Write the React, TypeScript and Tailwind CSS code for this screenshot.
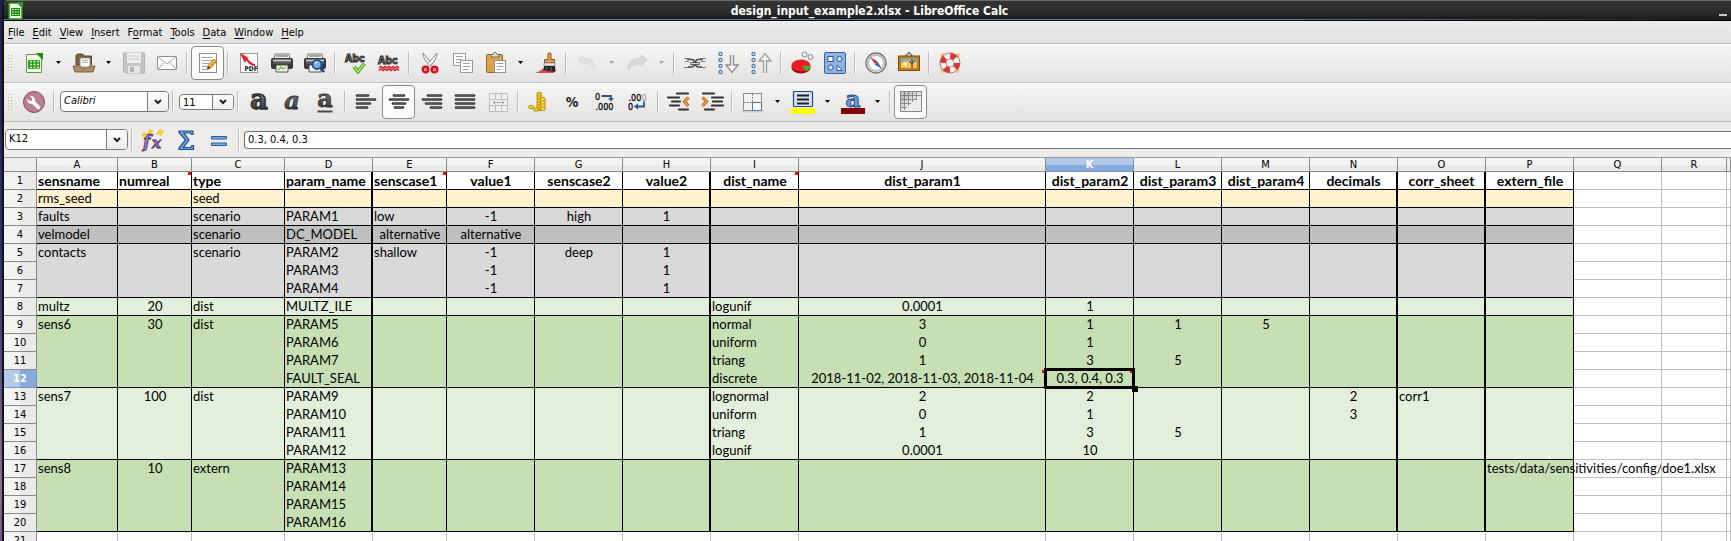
import React from "react";

/* ---------- icons ---------- */

function Icon({ children, size = 24 }: { children: React.ReactNode; size?: number }) {
  return (
    <svg width={size} height={size} viewBox="0 0 24 24" fill="none" aria-hidden="true" className="shrink-0 overflow-visible">
      {children}
    </svg>
  );
}

const NewSheet = () => (
  <Icon>
    <path d="M4.500 3.500h11l4 4v14h-15z" fill="#fbfdf9" stroke="#4aa52c" />
    <path d="M14 2h7v7z" fill="#1f8a12" />
    <rect x="6" y="9" width="12" height="9" rx="1" fill="#2fa016" />
    <path d="M8 10.500h2m1.500 0h2m1.500 0h2M8 13.500h2m1.500 0h2m1.500 0h2M8 16.500h2m1.500 0h2m1.500 0h2" stroke="#d9f3cd" strokeWidth="1.500" />
  </Icon>
);
const AppLogo = () => (
  <svg width="16" height="18" viewBox="0 0 16 18" aria-hidden="true">
    <path d="M1 1h9l4 4v12H1z" fill="#f2f7ef" stroke="#1d9410" strokeWidth="1.500" />
    <path d="M9 0h6v6z" fill="#27a316" />
    <path d="M3 6h9v8H3z" fill="#168a0a" />
    <path d="M4 7.500h2m1 0h1.500m1 0H11M4 10h2m1 0h1.500m1 0H11M4 12.500h2m1 0h1.500m1 0H11" stroke="#e3f6dc" />
  </svg>
);
const Folder = () => (
  <Icon>
    <path d="M4 14V4.500l1.500-1.500h5l1.500 2h7.500V14z" fill="#7c5f3c" stroke="#5c4428" />
    <path d="M8 7h10v9H8z" fill="#fff" stroke="#8d8d8d" />
    <path d="M10 9.500h6M10 11.500h6" stroke="#aaa" />
    <path d="M1 15h7l2 2h6l2-2h5l-2 6H3z" fill="#b08d66" stroke="#7d5f3c" />
  </Icon>
);
const Save = () => (
  <Icon>
    <path d="M1.500 2h21v20h-19l-2-2z" fill="#c4c4c4" stroke="#b2b2b2" />
    <path d="M5 2h14v10H5z" fill="#eee" />
    <path d="M6.500 5h11M6.500 8h11" stroke="#ccc" />
    <path d="M6 15h12v7H6z" fill="#e8e8e8" />
    <path d="M8 16h4v5H8z" fill="#b5b5b5" />
  </Icon>
);
const Mail = () => (
  <Icon>
    <rect x="2.500" y="5.500" width="19" height="13" rx="1" fill="#fff" stroke="#8b8b8b" />
    <path d="M3 6l9 7 9-7M3 18l6-6.500M21 18l-6-6.500" stroke="#a4a4a4" />
  </Icon>
);
const EditDoc = () => (
  <Icon>
    <rect x="3.500" y="2.500" width="17" height="19" fill="#fff" stroke="#8e8e8e" />
    <path d="M6 6.500h11M6 9.500h12M6 12.500h7M6 15.500h5M6 18.500h6" stroke="#a9a9a9" />
    <path d="M12 14.500l6-6.500 2.500 2.500-6 6.500-3 1z" fill="#f58a10" stroke="#a85606" strokeWidth=".8" />
    <path d="M13 15l6-6" stroke="#ffd35c" strokeWidth="1.300" />
    <path d="M11.500 18l.6-2.500 2 1.800z" fill="#222" />
  </Icon>
);
const Pdf = () => (
  <Icon>
    <rect x="3.500" y="2.500" width="17" height="19" fill="#fdfdfd" stroke="#9a9a9a" />
    <path d="M5 4c3 1 4 3 6 6s4 4 7 4M5 4l3 6 2-3z" stroke="#e3202c" strokeWidth="1.800" fill="#f05a62" />
    <text x="7.500" y="20" fontSize="6.500" fontWeight="700" fontFamily="DejaVu Sans Condensed, DejaVu Sans, sans-serif" fill="#111">PDF</text>
  </Icon>
);
const PrinterBody = () => (
  <>
    <path d="M5 3h14l1 5H4z" fill="#f4f4f4" stroke="#777" />
    <path d="M6 5h12" stroke="#555" />
    <rect x="1" y="7" width="22" height="11" rx="2" fill="#383838" />
    <path d="M3 9.500h18" stroke="#c9c9c9" strokeWidth="2" />
    <path d="M3 12h18" stroke="#777" />
    <path d="M6 14h12v7H6z" fill="#f3fbef" stroke="#4c4c4c" />
  </>
);
const Print = () => (
  <Icon>
    <PrinterBody />
    <path d="M8 19l3-3 2 2 3-2" stroke="#6cc04a" strokeWidth="1.500" />
  </Icon>
);
const Preview = () => (
  <Icon>
    <PrinterBody />
    <circle cx="14" cy="13.500" r="4.500" fill="#7fb0ea" stroke="#1d4f9c" strokeWidth="1.800" />
    <path d="M12 12.500l2-2" stroke="#e6f1ff" strokeWidth="1.500" />
    <path d="M17.500 17l3.500 4" stroke="#1d3f7c" strokeWidth="2.500" />
  </Icon>
);
const AbcText = () => (
  <text x="1" y="11" fontSize="10.500" fontWeight="700" fontFamily="DejaVu Sans Condensed, DejaVu Sans, sans-serif" fill="#8a8a8a" stroke="#2c2c2c" strokeWidth=".9">Abc</text>
);
const Spell = () => (
  <Icon>
    <AbcText />
    <path d="M10 16l4 4.500 6.500-8" stroke="#4b9d17" strokeWidth="3.500" />
    <path d="M10 16l4 4.500 6.500-8" stroke="#a7ec5e" strokeWidth="1.500" />
  </Icon>
);
const AutoSpell = () => (
  <Icon>
    <g transform="translate(0 2)"><AbcText /></g>
    <path d="M2 17l2-1.500 2 1.500 2-1.500 2 1.500 2-1.500 2 1.500 2-1.500 2 1.500 2-1.500 2 1.500M2 19.500L4 18l2 1.500L8 18l2 1.500 2-1.500 2 1.500 2-1.500 2 1.500 2-1.500 2 1.500" stroke="#d32029" strokeWidth="1.500" />
  </Icon>
);
const Cut = () => (
  <Icon>
    <path d="M5 2c0 5 3 9 7.500 13l2-2C11 9 8 6 5 2z" fill="#efefef" stroke="#7c7c7c" strokeWidth=".9" />
    <path d="M19 2c0 5-3 9-7.500 13l-2-2C13 9 16 6 19 2z" fill="#fafafa" stroke="#7c7c7c" strokeWidth=".9" />
    <circle cx="7.500" cy="18.500" r="2.800" stroke="#cc1322" strokeWidth="2.400" fill="#fff" />
    <circle cx="16.500" cy="18.500" r="2.800" stroke="#cc1322" strokeWidth="2.400" fill="#fff" />
    <circle cx="7.500" cy="18.500" r="1" fill="#cc1322" />
    <circle cx="16.500" cy="18.500" r="1" fill="#cc1322" />
  </Icon>
);
const Copy = () => (
  <Icon>
    <rect x="2.500" y="2.500" width="12" height="12" fill="#fff" stroke="#9a9a9a" />
    <path d="M5 5.500h7M5 8.500h6M5 11.500h4" stroke="#9f9f9f" />
    <rect x="9.500" y="9.500" width="12" height="12" fill="#fff" stroke="#9a9a9a" />
    <path d="M12 12.500h7M12 15.500h7M12 18.500h5" stroke="#9f9f9f" />
  </Icon>
);
const Paste = () => (
  <Icon>
    <rect x="2.500" y="3.500" width="16" height="18" rx="1" fill="#dba24b" stroke="#96631b" />
    <path d="M7 6V3.500h2L10 1.500h2l1 2h2V6z" fill="#ddd" stroke="#6a6a6a" />
    <rect x="10.500" y="9.500" width="11" height="12" fill="#fff" stroke="#8f8f8f" />
    <path d="M12.500 12.500h7M12.500 15.500h7M12.500 18.500h4" stroke="#a0a0a0" />
  </Icon>
);
const Brush = () => (
  <Icon>
    <path d="M1 22c4-1 6-3 9-5l10 1v4z" fill="#e14450" />
    <path d="M14 2.500q1.500-1.500 3 0v6h3.500V12h-10V8.500H14z" fill="#e2a252" stroke="#8a5a1e" />
    <path d="M10 12h11v3H10z" fill="#ededed" stroke="#777" strokeWidth=".7" />
    <path d="M10 15h11l.5 6-9-1-3-1z" fill="#262626" />
    <path d="M13 16l-1 3m5-3v4" stroke="#777" />
  </Icon>
);
const Undo = () => (
  <Icon>
    <path d="M3 9l5-5v3c8 0 12 4 12 11-2-4-6-6-12-6v2z" fill="#e1e1e1" stroke="#d8d8d8" strokeWidth=".8" />
  </Icon>
);
const Redo = () => (
  <Icon>
    <path d="M22 9l-6-5v3C7 7 3 11 3 19c3-4 7-6 13-6v2z" fill="#d9d9d9" stroke="#cccccc" strokeWidth=".8" />
  </Icon>
);
const Link = () => (
  <Icon>
    <path d="M1 7.500h6M2 10.500h4M1 16.500h6M17 7.500h6M18 10.500h4M17 16.500h6" stroke="#808080" />
    <path d="M4 8.500h5q2.500 0 2.500 3.500T9 16H5M20 8.500h-5q-2.500 0-2.500 3.500t2.500 4h4" stroke="#4f4f4f" strokeWidth="1.600" />
    <path d="M7 12.500h10" stroke="#4f4f4f" strokeWidth="2.600" />
    <path d="M7.500 12.500h9" stroke="#cfcfcf" />
  </Icon>
);
const Dots = () => (
  <>
    {[3, 9, 15, 21].map((y) => (
      <circle key={y} cx="4.500" cy={y} r="1.600" fill="#e9f0fb" stroke="#4c78b4" strokeWidth="1.200" />
    ))}
  </>
);
const SortDown = () => (
  <Icon>
    <Dots />
    <path d="M14.500 4v10h-4.500l6 7.500 6-7.500h-4.500V4" fill="#f2f2f2" stroke="#8d8d8d" strokeWidth="1.300" />
  </Icon>
);
const SortUp = () => (
  <Icon>
    <Dots />
    <path d="M14.500 22V10h-4.500l6-7.500 6 7.500h-4.500v12" fill="#f2f2f2" stroke="#9b9b9b" strokeWidth="1.300" />
  </Icon>
);
const Chart = () => (
  <Icon>
    <circle cx="14.500" cy="3.500" r="2.500" fill="#eee" stroke="#888" />
    <circle cx="20.500" cy="6" r="2.500" fill="#eee" stroke="#888" />
    <ellipse cx="11" cy="16.500" rx="9.500" ry="6" fill="#9c0c12" />
    <ellipse cx="11" cy="14.500" rx="9.500" ry="6" fill="#e81c22" />
    <path d="M12 15l8-.5c0 3-1 5-4 6z" fill="#45b020" />
  </Icon>
);
const Shapes = () => (
  <Icon>
    <rect x="1.500" y="1.500" width="21" height="21" rx="1.500" fill="#8fb4e3" stroke="#38659f" />
    <rect x="5" y="5.500" width="5" height="5" fill="#fff" stroke="#2c5692" />
    <circle cx="16.500" cy="8" r="2.600" fill="#cfe0f6" stroke="#2c5692" />
    <circle cx="7.500" cy="16.500" r="2.600" fill="#cfe0f6" stroke="#2c5692" />
    <path d="M14 14v5.500h5.500z" fill="#fff" stroke="#2c5692" />
  </Icon>
);
const Compass = () => (
  <Icon>
    <circle cx="12" cy="12" r="10" fill="#fff" stroke="#777" strokeWidth="1.400" />
    <circle cx="12" cy="12" r="8" stroke="#b9bfbf" strokeWidth="2" />
    <path d="M6 6l7.500 4.500-2.500 2.500z" fill="#d8232f" />
    <path d="M18 18l-7.500-4.500 3-3z" fill="#3c6dac" />
  </Icon>
);
const Gallery = () => (
  <Icon>
    <path d="M8 5.500l4-4 4 4" stroke="#777" strokeWidth="1.500" />
    <rect x="1.500" y="5" width="21" height="14.500" fill="#c07f17" stroke="#7b4a05" />
    <rect x="4" y="7.500" width="16" height="9.500" fill="#84abd0" />
    <path d="M4 12q8-5 16 0v5H4z" fill="#f1c067" />
    <circle cx="8" cy="13" r="2" fill="#fff0a8" />
    <path d="M15 17v-4l-3-3m3 3l3-3.500m-3 3V8" stroke="#3d2b12" />
  </Icon>
);
const Help = () => (
  <Icon>
    <path d="M3 3l18 18M21 3L3 21" stroke="#eac695" strokeWidth="4" />
    <circle cx="12" cy="12" r="7" stroke="#f6f0ec" strokeWidth="6" />
    <circle cx="12" cy="12" r="7" stroke="#dc3a2e" strokeWidth="6" strokeDasharray="5.500 5.500" />
    <circle cx="12" cy="12" r="10" stroke="#a84339" strokeWidth=".7" />
    <circle cx="12" cy="12" r="4" stroke="#a87a75" strokeWidth=".7" fill="#f1efee" />
  </Icon>
);
const Wrench = () => (
  <Icon>
    <circle cx="12" cy="12" r="10.500" fill="#bb7f92" stroke="#86485c" />
    <path d="M8 6l2.500 3-1 1.800-2.500.2L5.500 8.500c-1 3.500 1.500 6 4.500 5.200l5.500 5.300c1.500 1 3.500-1 2.500-2.500l-5-5.200C13.700 8 11.500 5.500 8 6z" fill="#fff" />
  </Icon>
);
const FmtA = ({ kind }: { kind: "bold" | "italic" | "under" }) => (
  <Icon>
    <defs>
      <linearGradient id={`ink-${kind}`} x1="0" y1="0" x2="0" y2="1">
        <stop offset="0" stopColor="#999" />
        <stop offset="1" stopColor="#222" />
      </linearGradient>
    </defs>
    <text
      x="12" y={kind === "under" ? 17 : 19} textAnchor="middle"
      fontSize={kind === "bold" ? 27 : 24}
      fontWeight="700"
      fontStyle={kind === "italic" ? "italic" : "normal"}
      fontFamily="DejaVu Serif, serif"
      fill={`url(#ink-${kind})`} stroke="#303030" strokeWidth={kind === "bold" ? 1.4 : 0.8}
    >a</text>
    {kind === "under" && <path d="M4.500 21.500h15" stroke="#4a4a4a" strokeWidth="2" />}
  </Icon>
);
const Bars = ({ rows }: { rows: [number, number][] }) => (
  <Icon>
    {rows.map(([a, b], i) => (
      <g key={i}>
        <path d={`M${a} ${5.5 + i * 4}H${b}`} stroke="#333" strokeWidth="2.600" strokeLinecap="round" />
        <path d={`M${a} ${5 + i * 4}H${b}`} stroke="#777" strokeWidth="1" />
      </g>
    ))}
  </Icon>
);
const Merge = () => (
  <Icon>
    <path d="M3.500 3.500h18v18h-18zM3.500 9.500h18M3.500 15.500h18M9.500 3.500v6m6-6v6m-6 6v6m6-6v6" stroke="#bdbdbd" fill="#f0f0f0" />
    <path d="M7 12.500h11M9 11l-2 1.500L9 14m7-3l2 1.500-2 1.500" stroke="#a9a9a9" />
  </Icon>
);
const Coins = () => (
  <Icon>
    <path d="M10 3q2-1.500 4.500 0v17q-2.500 1.500-4.500 0z" fill="#e9c31c" stroke="#a88503" strokeWidth=".8" />
    <path d="M13.500 8q2-1.500 4.500 0v12q-2.500 1.500-4.500 0z" fill="#f3d43c" stroke="#a88503" strokeWidth=".8" />
    <path d="M10 6h4m-4 3h3.500m-3.500 3h3.500m-3.500 3h3.500m-3.500 3h3.500m0-7H18m-4.500 3H18m-4.500 3H18" stroke="#b8940a" strokeWidth=".8" />
    <ellipse cx="4" cy="17" rx="2.600" ry="1.800" fill="#f1cf30" stroke="#a88503" strokeWidth=".8" />
    <ellipse cx="9" cy="19.500" rx="2.600" ry="1.800" fill="#f1cf30" stroke="#a88503" strokeWidth=".8" />
  </Icon>
);
const numFont = "DejaVu Sans Condensed, DejaVu Sans, sans-serif";
const Percent = () => (
  <Icon>
    <text x="12" y="16.500" textAnchor="middle" fontSize="14" fontWeight="700" fontFamily={numFont} fill="#1a1a1a">%</text>
  </Icon>
);
const AddDecimal = () => (
  <Icon>
    <text x="2" y="9.500" fontSize="9" fontFamily={numFont} fill="#111" stroke="#111" strokeWidth=".3">0</text>
    <text x="2.500" y="19.500" fontSize="9" fontFamily={numFont} fill="#111" stroke="#111" strokeWidth=".3">.000</text>
    <path d="M8.500 6h9.500v3" stroke="#2f5584" strokeWidth="1.800" />
    <path d="M15 8h6l-3 3.500z" fill="#2f5584" />
  </Icon>
);
const DropDecimal = () => (
  <Icon>
    <text x="2.500" y="10.500" fontSize="9" fontFamily={numFont} fill="#111" stroke="#111" strokeWidth=".3">.00<tspan fill="#aaa" stroke="#aaa">0</tspan></text>
    <text x="2" y="19.500" fontSize="9" fontFamily={numFont} fill="#111" stroke="#111" strokeWidth=".3">0</text>
    <path d="M18 11.500v5h-6" stroke="#2f5584" strokeWidth="1.800" />
    <path d="M12 13.500v6l-4-3z" fill="#2f5584" />
  </Icon>
);
const Indent = ({ dir }: { dir: "left" | "right" }) => (
  <Icon>
    {dir === "left" ? (
      <>
        <path d="M10 3.500h11M1 7.500h11M5 11.500h8M3 15.500h9M12 19.500h9" stroke="#333" strokeWidth="2.200" strokeLinecap="round" />
        <path d="M21.500 7.500l-4 4 4 4.500" stroke="#bd5606" strokeWidth="3" />
        <path d="M21.500 7.500l-4 4 4 4.500" stroke="#f7a254" strokeWidth="1.200" />
      </>
    ) : (
      <>
        <path d="M3 3.500h11M12 7.500h11M13 11.500h9M12 15.500h11M5 19.500h9" stroke="#333" strokeWidth="2.200" strokeLinecap="round" />
        <path d="M2.500 7.500l4 4-4 4.500" stroke="#bd5606" strokeWidth="3" />
        <path d="M2.500 7.500l4 4-4 4.500" stroke="#f7a254" strokeWidth="1.200" />
      </>
    )}
  </Icon>
);
const Borders = () => (
  <Icon>
    <path d="M1 21.500h22" stroke="#cfcfcf" strokeWidth="2" />
    <rect x="2.500" y="3.500" width="18" height="17" fill="#f3f3f3" stroke="#8f8f8f" />
    <path d="M11.500 4v8M3 12.500h8" stroke="#666" strokeDasharray="1.500 1.500" />
    <rect x="11.500" y="12.500" width="9" height="8" fill="#fff" stroke="#4c78b4" />
  </Icon>
);
const Highlight = () => (
  <Icon>
    <rect x="2.500" y="1.500" width="19" height="15" rx="1" fill="#d5e3f5" stroke="#1f4a88" strokeWidth="1.200" />
    <path d="M6 5.500h12M6 9.500h12M6 13.500h12" stroke="#222" strokeWidth="2" />
    <path d="M0 18h24v6H0z" fill="#ffff00" />
  </Icon>
);
const FontColor = () => (
  <Icon>
    <text x="12" y="16.500" textAnchor="middle" fontSize="23" fontWeight="700" fontFamily="DejaVu Serif, serif" fill="#6e9fd9" stroke="#1f4a88" strokeWidth=".9">a</text>
    <path d="M0 18h24v6H0z" fill="#800000" />
  </Icon>
);
const GridLines = () => (
  <Icon>
    <defs>
      <linearGradient id="sheet-fade" x1="0" y1="0" x2="1" y2="1">
        <stop offset="0.200" stopColor="#6f6f6f" />
        <stop offset="0.550" stopColor="#6f6f6f" stopOpacity="0" />
      </linearGradient>
    </defs>
    <rect x="1.500" y="1.500" width="21" height="20" fill="#ececec" stroke="#8a8a8a" />
    <path d="M2 5.500h20v.6H2zM2 9.500h20v.6H2zM2 13.500h20v.6H2zM2 17.500h20v.6H2zM5.500 2h.6v19h-.6zM9.500 2h.6v19h-.6zM13.500 2h.6v19h-.6zM17.500 2h.6v19h-.6z" fill="none" />
    <path d="M2 5.500h20M2 9.500h16M2 13.500h10M2 17.500h6M5.500 2v18M9.500 2v14M13.500 2v10M17.500 2v7" stroke="#858585" strokeWidth=".9" />
    <path d="M2 2h20v19H2z" fill="url(#sheet-fade)" opacity=".35" />
  </Icon>
);
const FxWizard = () => (
  <Icon>
    <text x="2" y="18.500" fontSize="17" fontWeight="700" fontStyle="italic" fontFamily="DejaVu Serif, serif" fill="#9a7ab0" stroke="#53306e" strokeWidth=".8">f</text>
    <text x="11" y="19.500" fontSize="15" fontWeight="700" fontStyle="italic" fontFamily="DejaVu Serif, serif" fill="#9a7ab0" stroke="#53306e" strokeWidth=".8">x</text>
    <path d="M3 4l1 2 2 .5L4.500 8 4 10 2.500 8 .5 7.500 2 6zM9 1l1 1.500 2 .5-1.500 1.500L10 6 8.500 5l-2 .5 1-2zM19 1l1.500 2 2.500.5-2 2L20 8l-2-2-2.500.5L17 4z" fill="#f6d83a" stroke="#dcb818" strokeWidth=".5" />
  </Icon>
);
const Sigma = () => (
  <Icon>
    <path d="M5 3h14v3.500h-1.500l-1-1.500H10l5 7-5.500 7.500h7l1.500-2h1.500v4H5v-1.500L11.500 12 5 4.500z" fill="#6fa0dc" stroke="#204f8e" strokeWidth="1.200" />
  </Icon>
);
const Equals = () => (
  <Icon>
    <path d="M4.500 8.500h15v2.500h-15zM4.500 15h15v2.500h-15z" fill="#7aaae2" stroke="#2a5ea3" />
  </Icon>
);

/* ---------- toolbar pieces ---------- */

function Tool({ label, icon, pressed, disabled }: { label: string; icon: React.ReactNode; pressed?: boolean; disabled?: boolean }) {
  return (
    <button
      type="button"
      aria-label={label}
      aria-pressed={pressed}
      disabled={disabled}
      className={
        pressed
          ? "flex h-[34px] w-[33px] shrink-0 items-center justify-center rounded border border-[#8c8c8c] bg-[#fbfbfb]"
          : "flex h-8 w-[33px] shrink-0 items-center justify-center"
      }
    >
      {icon}
    </button>
  );
}

function Caret({ label, dim }: { label: string; dim?: boolean }) {
  return (
    <button type="button" aria-label={label} disabled={dim} className="flex h-8 w-[17px] shrink-0 items-center justify-center">
      <svg width="5" height="3" viewBox="0 0 5 3" aria-hidden="true">
        <path d="M0 0h5L2.500 3z" fill={dim ? "#a5a5a5" : "#000"} />
      </svg>
    </button>
  );
}

const Sep = () => <span className="mx-[3px] h-[22px] w-[2px] shrink-0 border-l border-[#bdbcba] bg-[#fafafa]" />;
const Grip = () => (
  <span className="ml-[3px] mr-[5px] h-[18px] w-[5px] shrink-0 bg-[radial-gradient(#b9b9b9_1px,transparent_1px)] bg-[size:3px_3px]" />
);

function Combo({ label, value, box, text, arrow }: { label: string; value: string; box: string; text: string; arrow: string }) {
  return (
    <label className={`relative flex shrink-0 overflow-hidden rounded border border-[#7b7b7b] bg-white ${box}`}>
      <select aria-label={label} defaultValue={value} className={`h-full w-full appearance-none bg-transparent pl-[3px] outline-none ${text}`}>
        <option value={value}>{value}</option>
      </select>
      <span className={`pointer-events-none absolute inset-y-0 right-0 flex items-center justify-center border-l border-[#7b7b7b] bg-gradient-to-b from-white to-[#ececeb] ${arrow}`}>
        <svg width="8" height="6" viewBox="0 0 8 6" fill="none" aria-hidden="true">
          <path d="M1 1l3 3 3-3" stroke="#222" strokeWidth="2" />
        </svg>
      </span>
    </label>
  );
}

/* ---------- sheet data ---------- */

type Col = { id: string; width: string; thick?: boolean; left?: boolean };
const columns: Col[] = [
  { id: "A", width: "w-[81px]", left: true },
  { id: "B", width: "w-[74px]" },
  { id: "C", width: "w-[93px]", left: true },
  { id: "D", width: "w-[88px]", thick: true, left: true },
  { id: "E", width: "w-[74px]" },
  { id: "F", width: "w-[88px]" },
  { id: "G", width: "w-[88px]" },
  { id: "H", width: "w-[88px]", thick: true },
  { id: "I", width: "w-[88px]", left: true },
  { id: "J", width: "w-[247px]" },
  { id: "K", width: "w-[88px]" },
  { id: "L", width: "w-[88px]" },
  { id: "M", width: "w-[88px]" },
  { id: "N", width: "w-[88px]", thick: true },
  { id: "O", width: "w-[88px]", thick: true },
  { id: "P", width: "w-[88px]" },
  { id: "Q", width: "w-[88px]" },
  { id: "R", width: "w-[65px]" },
  { id: "S", width: "w-auto" },
];

type Row = { fill: string; end?: boolean; cells: Record<string, string> };
const LIGHT = "bg-[#e2efda]";
const GREEN = "bg-[#c6e0b4]";
const GREY = "bg-[#d9d9d9]";
const rows: Row[] = [
  {
    fill: "bg-white", end: true,
    cells: {
      A: "sensname", B: "numreal", C: "type", D: "param_name", E: "senscase1", F: "value1", G: "senscase2", H: "value2",
      I: "dist_name", J: "dist_param1", K: "dist_param2", L: "dist_param3", M: "dist_param4", N: "decimals", O: "corr_sheet", P: "extern_file",
    },
  },
  { fill: "bg-[#fff2cc]", end: true, cells: { A: "rms_seed", C: "seed" } },
  { fill: GREY, end: true, cells: { A: "faults", C: "scenario", D: "PARAM1", E: "low", F: "-1", G: "high", H: "1" } },
  { fill: "bg-[#bfbfbf]", end: true, cells: { A: "velmodel", C: "scenario", D: "DC_MODEL", E: "alternative", F: "alternative" } },
  { fill: GREY, cells: { A: "contacts", C: "scenario", D: "PARAM2", E: "shallow", F: "-1", G: "deep", H: "1" } },
  { fill: GREY, cells: { D: "PARAM3", F: "-1", H: "1" } },
  { fill: GREY, end: true, cells: { D: "PARAM4", F: "-1", H: "1" } },
  { fill: LIGHT, end: true, cells: { A: "multz", B: "20", C: "dist", D: "MULTZ_ILE", I: "logunif", J: "0.0001", K: "1" } },
  { fill: GREEN, cells: { A: "sens6", B: "30", C: "dist", D: "PARAM5", I: "normal", J: "3", K: "1", L: "1", M: "5" } },
  { fill: GREEN, cells: { D: "PARAM6", I: "uniform", J: "0", K: "1" } },
  { fill: GREEN, cells: { D: "PARAM7", I: "triang", J: "1", K: "3", L: "5" } },
  { fill: GREEN, end: true, cells: { D: "FAULT_SEAL", I: "discrete", J: "2018-11-02, 2018-11-03, 2018-11-04", K: "0.3, 0.4, 0.3" } },
  { fill: LIGHT, cells: { A: "sens7", B: "100", C: "dist", D: "PARAM9", I: "lognormal", J: "2", K: "2", N: "2", O: "corr1" } },
  { fill: LIGHT, cells: { D: "PARAM10", I: "uniform", J: "0", K: "1", N: "3" } },
  { fill: LIGHT, cells: { D: "PARAM11", I: "triang", J: "1", K: "3", L: "5" } },
  { fill: LIGHT, end: true, cells: { D: "PARAM12", I: "logunif", J: "0.0001", K: "10" } },
  { fill: GREEN, cells: { A: "sens8", B: "10", C: "extern", D: "PARAM13", P: "tests/data/sensitivities/config/doe1.xlsx" } },
  { fill: GREEN, cells: { D: "PARAM14" } },
  { fill: GREEN, cells: { D: "PARAM15" } },
  { fill: GREEN, end: true, cells: { D: "PARAM16" } },
  { fill: "bg-white", cells: {} },
];

const notes = new Set(["B1", "E1", "I1", "J12", "K12"]);
const leftCells = new Set(["B1", "E1", "E3", "E5", "O13", "P17"]);
const centerCells = new Set(["I1"]);

function Cell({ col, row, n }: { col: Col; row: Row; n: number }) {
  const ref = col.id + n;
  const inside = col.id <= "P" && n <= 20;
  const left = (col.left && !centerCells.has(ref)) || leftCells.has(ref);
  const right = !inside ? "border-r border-r-[#c0c0c0]" : col.thick ? "border-r-2 border-r-black" : "border-r border-r-black";
  const bottom = !inside ? "border-b border-b-[#c0c0c0]" : row.end ? "border-b border-b-black" : "";
  return (
    <td className={`relative h-[18px] overflow-visible p-0 align-top ${right} ${bottom} ${inside ? row.fill : ""} ${left ? "text-left" : "text-center"}`}>
      <span className="block h-[17px] whitespace-nowrap pl-px leading-[17px]">{row.cells[col.id] ?? ""}</span>
      {notes.has(ref) && <span className="absolute right-0 top-0 size-[3px] bg-[#ff0000]" />}
      {ref === "K12" && (
        <span className="absolute -inset-0.5 z-10 border-[3px] border-black">
          <span className="absolute -bottom-1.5 -right-1.5 size-1.5 bg-black" />
        </span>
      )}
    </td>
  );
}

const menus: [string, string, string][] = [
  ["", "F", "ile"], ["", "E", "dit"], ["", "V", "iew"], ["", "I", "nsert"], ["F", "o", "rmat"],
  ["", "T", "ools"], ["", "D", "ata"], ["", "W", "indow"], ["", "H", "elp"],
];

const bar = "flex shrink-0 items-center overflow-hidden border-b border-b-[#bdbcba] border-t border-t-white bg-gradient-to-b from-[#f5f5f4] to-[#e4e3e1] pb-0.5";

export default function App() {
  return (
    <div className="flex h-screen overflow-hidden bg-[linear-gradient(#20204e,#34346c_50%,#8a6f9c_90%,#6d5a8c)] font-['DejaVu_Sans_Condensed','DejaVu_Sans',sans-serif] text-[11px] text-black">
      <div className="ml-[2px] flex min-w-0 flex-1 flex-col overflow-hidden rounded-tl-md border-l-2 border-[#111] bg-[#edecea]">
        <header className="flex h-[21px] shrink-0 items-center border-b border-t border-b-black border-t-[#6a6a6a] bg-[linear-gradient(90deg,#56749a_75%,#1a1a1a),linear-gradient(#343434,#2d2d2d_55%,#181818)] bg-[length:100%_1px,100%_100%] bg-bottom bg-no-repeat px-1">
          <AppLogo />
          <h1 className="flex-1 pr-1 text-center text-[12px] font-bold leading-4 text-white">design_input_example2.xlsx - LibreOffice Calc</h1>
          <button type="button" aria-label="Minimize" className="flex h-4 w-2 items-center justify-center">
            <span className="mt-2 h-[2px] w-2 bg-[#c9c9c9]" />
          </button>
        </header>

        <nav className="flex h-[23px] shrink-0 items-center gap-2 border-b border-[#bdbcba] bg-gradient-to-b from-[#edecea] to-[#e3e2e0] px-1 pt-0.5">
          {menus.map(([a, b, c]) => (
            <button key={a + b + c} type="button" className="leading-4">
              {a}<span className="underline underline-offset-2">{b}</span>{c}
            </button>
          ))}
        </nav>

        <div role="toolbar" aria-label="Standard" className={`h-[39px] ${bar}`}>
          <Grip />
          <Tool label="New" icon={<NewSheet />} /><Caret label="New options" />
          <Tool label="Open" icon={<Folder />} /><Caret label="Recent files" />
          <Tool label="Save" icon={<Save />} disabled />
          <Tool label="Email" icon={<Mail />} />
          <Sep />
          <Tool label="Edit file" icon={<EditDoc />} pressed />
          <Sep />
          <Tool label="Export as PDF" icon={<Pdf />} />
          <Tool label="Print" icon={<Print />} />
          <Tool label="Print preview" icon={<Preview />} />
          <Sep />
          <Tool label="Spelling" icon={<Spell />} />
          <Tool label="Automatic spell checking" icon={<AutoSpell />} />
          <Sep />
          <Tool label="Cut" icon={<Cut />} />
          <Tool label="Copy" icon={<Copy />} />
          <Tool label="Paste" icon={<Paste />} /><Caret label="Paste options" />
          <Tool label="Clone formatting" icon={<Brush />} />
          <Sep />
          <Tool label="Undo" icon={<Undo />} disabled /><Caret label="Undo history" dim />
          <Tool label="Redo" icon={<Redo />} disabled /><Caret label="Redo history" dim />
          <Sep />
          <Tool label="Hyperlink" icon={<Link />} />
          <Tool label="Sort ascending" icon={<SortDown />} />
          <Tool label="Sort descending" icon={<SortUp />} />
          <Sep />
          <Tool label="Chart" icon={<Chart />} />
          <Tool label="Draw functions" icon={<Shapes />} />
          <Sep />
          <Tool label="Navigator" icon={<Compass />} />
          <Tool label="Gallery" icon={<Gallery />} />
          <Sep />
          <Tool label="Help" icon={<Help />} />
        </div>

        <div role="toolbar" aria-label="Formatting" className={`h-[39px] ${bar}`}>
          <Grip />
          <Tool label="Styles" icon={<Wrench />} />
          <Sep />
          <Combo label="Font name" value="Calibri" box="ml-[2px] h-[21px] w-[109px]" text="italic" arrow="w-[21px]" />
          <Sep />
          <Combo label="Font size" value="11" box="ml-[2px] h-[16px] w-[55px]" text="" arrow="w-[21px]" />
          <Sep />
          <Tool label="Bold" icon={<FmtA kind="bold" />} />
          <Tool label="Italic" icon={<FmtA kind="italic" />} />
          <Tool label="Underline" icon={<FmtA kind="under" />} />
          <Sep />
          <Tool label="Align left" icon={<Bars rows={[[3, 14], [3, 21], [3, 16], [3, 13]]} />} />
          <Tool label="Align center" icon={<Bars rows={[[7, 17], [3, 21], [6, 18], [8, 16]]} />} pressed />
          <Tool label="Align right" icon={<Bars rows={[[8, 21], [3, 21], [6, 21], [11, 21]]} />} />
          <Tool label="Justify" icon={<Bars rows={[[3, 21], [3, 21], [3, 21], [3, 21]]} />} />
          <Tool label="Merge cells" icon={<Merge />} disabled />
          <Sep />
          <Tool label="Currency" icon={<Coins />} />
          <Tool label="Percent" icon={<Percent />} />
          <Tool label="Add decimal place" icon={<AddDecimal />} />
          <Tool label="Delete decimal place" icon={<DropDecimal />} />
          <Sep />
          <Tool label="Decrease indent" icon={<Indent dir="left" />} />
          <Tool label="Increase indent" icon={<Indent dir="right" />} />
          <Sep />
          <Tool label="Borders" icon={<Borders />} /><Caret label="Border options" />
          <Tool label="Background color" icon={<Highlight />} /><Caret label="Background color options" />
          <Tool label="Font color" icon={<FontColor />} /><Caret label="Font color options" />
          <Sep />
          <Tool label="Grid lines" icon={<GridLines />} pressed />
        </div>

        <div className="flex h-[35px] shrink-0 items-center pl-px">
          <Combo label="Name box" value="K12" box="h-[21px] w-[123px]" text="" arrow="w-[21px]" />
          <Sep />
          <Tool label="Function wizard" icon={<FxWizard />} />
          <Tool label="Sum" icon={<Sigma />} />
          <Tool label="Function" icon={<Equals />} />
          <Sep />
          <input
            aria-label="Formula"
            defaultValue="0.3, 0.4, 0.3"
            className="ml-px h-[18px] min-w-0 flex-1 rounded-l border-y border-l border-[#6f6f6f] bg-white pl-[3px] outline-none"
          />
        </div>

        <main className="min-h-0 flex-1 overflow-hidden border-t border-[#9c9c9c] bg-white">
          <table className="w-full table-fixed border-separate border-spacing-0 font-['Lato','Liberation_Sans',sans-serif] text-[13px]">
            <colgroup>
              <col className="w-[33px]" />
              {columns.map((c) => <col key={c.id} className={c.width} />)}
            </colgroup>
            <thead className="font-['DejaVu_Sans_Condensed','DejaVu_Sans',sans-serif] text-[11px]">
              <tr>
                <td className="h-[14px] border-b border-r border-[#8a8a8a] bg-[#efeeed] p-0" />
                {columns.map((c) => (
                  <th
                    key={c.id}
                    scope="col"
                    className={
                      c.id === "K"
                        ? "h-[14px] overflow-hidden border-b border-r border-[#7394c2] bg-[linear-gradient(#b2c9e8_50%,#85aadb_50%)] p-0 font-bold leading-[13px] text-white"
                        : "h-[14px] overflow-hidden border-b border-r border-[#8a8a8a] bg-[linear-gradient(#f4f4f3_50%,#eaeae8_50%)] p-0 font-normal leading-[13px]"
                    }
                  >
                    {c.id === "S" ? "" : c.id}
                  </th>
                ))}
              </tr>
            </thead>
            <tbody>
              {rows.map((row, i) => (
                <tr key={i} className={i === 0 ? "text-[14px] font-bold" : ""}>
                  <th
                    scope="row"
                    className={
                      i === 11
                        ? "h-[18px] border-b border-r border-[#7394c2] bg-[linear-gradient(90deg,#b2c9e8_50%,#85aadb_50%)] p-0 font-['DejaVu_Sans_Condensed','DejaVu_Sans',sans-serif] text-[11px] font-bold leading-[17px] text-white"
                        : "h-[18px] border-b border-r border-[#8a8a8a] bg-[linear-gradient(90deg,#f4f4f3_50%,#eaeae8_50%)] p-0 font-['DejaVu_Sans_Condensed','DejaVu_Sans',sans-serif] text-[11px] font-normal leading-[17px]"
                    }
                  >
                    {i + 1}
                  </th>
                  {columns.map((c) => <Cell key={c.id} col={c} row={row} n={i + 1} />)}
                </tr>
              ))}
            </tbody>
          </table>
        </main>
      </div>
    </div>
  );
}
